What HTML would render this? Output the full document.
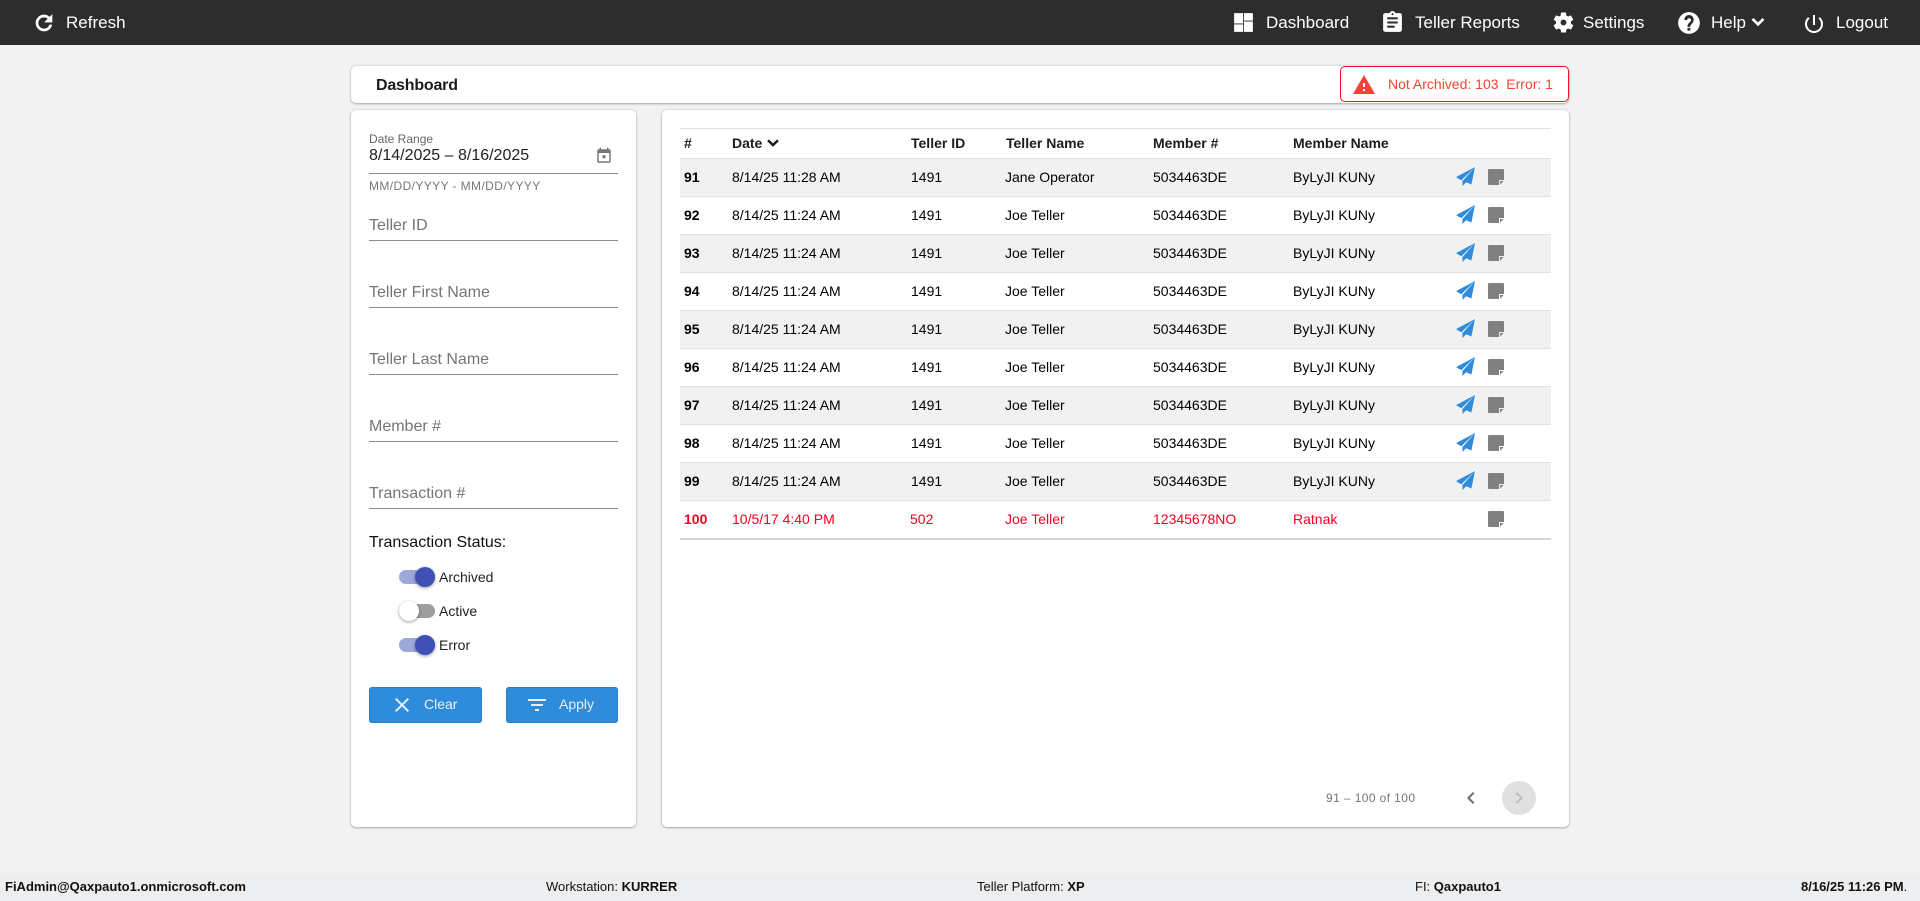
<!DOCTYPE html>
<html lang="en">
<head>
<meta charset="utf-8">
<title>Dashboard</title>
<style>
*{box-sizing:border-box}
html,body{margin:0;padding:0;width:1920px;height:901px;overflow:hidden;background:#f2f2f2;font-family:"Liberation Sans",Arial,sans-serif;color:#000}
.a{position:absolute;white-space:nowrap}
svg{position:absolute;display:block}
#top{left:0;top:0;width:1920px;height:45px;background:#2d2d2d}
.nav{color:#fff;font-size:17px;line-height:20px;top:13px}
.card{background:#fff;border-radius:5px;box-shadow:0 1px 2px rgba(0,0,0,.25),0 0 2px rgba(0,0,0,.18)}
.ph{left:369px;font-size:16px;line-height:20px;color:#757575}
.ln{left:369px;width:249px;height:1px;background:#8c8c8c}
.tl{font-size:14px;line-height:16px;color:#222}
.trk{left:399px;width:36px;height:14px;border-radius:7px}
.th{width:20px;height:20px;border-radius:50%;box-shadow:0 1px 3px rgba(0,0,0,.4)}
.btn{background:#2f8cdb;border-radius:3px;height:36px;top:687px;box-shadow:inset 0 0 0 1px #2a80c8}
.bt{color:#e6f0fa;font-size:14px;line-height:16px;top:696px}
.row{left:680px;width:871px;height:38px;margin-top:1px;border-bottom:1px solid #dfdfe6}
.row.g{background:#f1f1f2}
.c{font-size:14px;line-height:16px;color:#000}
.h{font-size:14px;line-height:16px;font-weight:bold;color:#1c1c1c;top:135px}
.r{color:#f4001c}
.ft{font-size:13px;line-height:16px;top:879px;color:#111}
</style>
</head>
<body>
<svg width="0" height="0" style="position:absolute"><defs>
<symbol id="pl" viewBox="0 0 18 18"><path fill="#2f8cdb" d="M18 0L0 9.6l5 3L18 0zM18 0L6.1 13.4V18l3.5-3.6 5 2.2L18 0z"/></symbol>
<symbol id="nt" viewBox="0 0 16 16"><path fill="#808080" d="M1 0h14a1 1 0 011 1v10h-5v5H1a1 1 0 01-1-1V1a1 1 0 011-1z"/><path fill="#808080" d="M12 12h3.6L12 15.6z"/></symbol>
</defs></svg>
<div class="a" id="top"></div>
<svg style="left:32px;top:11px" width="24" height="24" viewBox="0 0 24 24" fill="#fff" stroke="#fff" stroke-width=".7"><path d="M17.65 6.35C16.2 4.9 14.21 4 12 4c-4.42 0-7.99 3.58-7.99 8s3.57 8 7.99 8c3.73 0 6.84-2.55 7.73-6h-2.08c-.82 2.33-3.04 4-5.65 4-3.31 0-6-2.69-6-6s2.69-6 6-6c1.66 0 3.14.69 4.22 1.78L13 11h7V4l-2.35 2.35z"/></svg>
<div class="a nav" style="left:66px">Refresh</div>

<svg style="left:1231px;top:10px" width="25" height="25" viewBox="0 0 24 24" fill="#fff"><path d="M3 13h8.6V3H3v10zm0 8h8.6v-7.2H3V21zm9.4 0H21V11h-8.6v10zm0-18v7.2H21V3h-8.6z"/></svg>
<div class="a nav" style="left:1266px">Dashboard</div>
<svg style="left:1380px;top:10px" width="25" height="25" viewBox="0 0 24 24" fill="#fff"><path d="M19 3h-4.18C14.4 1.84 13.3 1 12 1c-1.3 0-2.4.84-2.82 2H5c-1.1 0-2 .9-2 2v14c0 1.1.9 2 2 2h14c1.1 0 2-.9 2-2V5c0-1.1-.9-2-2-2zm-7 0c.55 0 1 .45 1 1s-.45 1-1 1-1-.45-1-1 .45-1 1-1zm2 14H7v-2h7v2zm3-4H7v-2h10v2zm0-4H7V7h10v2z"/></svg>
<div class="a nav" style="left:1415px">Teller Reports</div>
<svg style="left:1551px;top:10px" width="25" height="25" viewBox="0 0 24 24" fill="#fff"><path d="M19.14 12.94c.04-.3.06-.61.06-.94 0-.32-.02-.64-.07-.94l2.03-1.58c.18-.14.23-.41.12-.61l-1.92-3.32c-.12-.22-.37-.29-.59-.22l-2.39.96c-.5-.38-1.03-.7-1.62-.94l-.36-2.54c-.04-.24-.24-.41-.48-.41h-3.84c-.24 0-.43.17-.47.41l-.36 2.54c-.59.24-1.13.57-1.62.94l-2.39-.96c-.22-.08-.47 0-.59.22L2.74 8.87c-.12.21-.08.47.12.61l2.03 1.58c-.05.3-.09.63-.09.94s.02.64.07.94l-2.03 1.58c-.18.14-.23.41-.12.61l1.92 3.32c.12.22.37.29.59.22l2.39-.96c.5.38 1.03.7 1.62.94l.36 2.54c.05.24.24.41.48.41h3.84c.24 0 .44-.17.47-.41l.36-2.54c.59-.24 1.13-.56 1.62-.94l2.39.96c.22.08.47 0 .59-.22l1.92-3.32c.12-.22.07-.47-.12-.61l-2.01-1.58zM12 14.8c-1.55 0-2.8-1.25-2.8-2.8s1.25-2.8 2.8-2.8 2.8 1.25 2.8 2.8-1.25 2.8-2.8 2.8z"/></svg>
<div class="a nav" style="left:1583px">Settings</div>
<svg style="left:1676px;top:10px" width="26" height="26" viewBox="0 0 24 24" fill="#fff"><path d="M12 2C6.48 2 2 6.48 2 12s4.48 10 10 10 10-4.48 10-10S17.52 2 12 2zm1.2 17h-2.6v-2.5h2.6V19zm2.4-7.3l-1 1c-.9.9-1.4 1.5-1.4 2.9h-2.6v-.6c0-1.2.5-2.2 1.3-3l1.4-1.4c.4-.36.6-.8.6-1.3 0-.95-.8-1.7-1.8-1.7s-1.8.75-1.8 1.7H7.7C7.7 6.4 9.6 4.6 12 4.6s4.3 1.8 4.3 4.2c0 1.1-.3 2.1-.7 2.9z"/></svg>
<div class="a nav" style="left:1711px">Help</div>
<svg style="left:1747px;top:11px" width="22" height="22" viewBox="0 0 24 24" fill="#fff"><path d="M16.9 7.6L12 12.5 7.1 7.6 5 9.7l7 7 7-7z"/></svg>
<svg style="left:1802px;top:12px" width="24" height="24" viewBox="0 0 24 24" fill="#fff"><path d="M13 3h-2v10h2V3zm4.83 2.17l-1.42 1.42C17.99 7.86 19 9.81 19 12c0 3.87-3.13 7-7 7s-7-3.13-7-7c0-2.19 1.01-4.14 2.58-5.42L6.17 5.17C4.23 6.82 3 9.26 3 12c0 4.97 4.03 9 9 9s9-4.03 9-9c0-2.74-1.23-5.18-3.17-6.83z"/></svg>
<div class="a nav" style="left:1836px">Logout</div>

<div class="a card" style="left:351px;top:66px;width:1218px;height:37px"></div>
<div class="a" style="left:376px;top:76px;font-size:16px;line-height:20px;font-weight:bold;color:#1c1c1c;letter-spacing:-.2px">Dashboard</div>
<div class="a" style="left:1340px;top:66px;width:229px;height:36px;border:1.5px solid #f4101c;border-radius:5px;background:#fff"></div>
<svg style="left:1352px;top:73px" width="24" height="24" viewBox="0 0 24 24" fill="#f44336"><path d="M1 21h22L12 2 1 21zm12-3h-2v-2h2v2zm0-4h-2v-4h2v4z"/></svg>
<div class="a" style="left:1388px;top:76px;font-size:14px;line-height:16px;color:#f44336;white-space:pre">Not Archived: 103  Error: 1</div>

<div class="a card" style="left:351px;top:110px;width:285px;height:717px"></div>
<div class="a" style="left:369px;top:132px;font-size:12px;line-height:14px;color:#666">Date Range</div>
<div class="a" style="left:369px;top:147px;font-size:16px;line-height:18px;color:#222">8/14/2025 – 8/16/2025</div>
<svg style="left:595px;top:147px" width="18" height="18" viewBox="0 0 24 24" fill="#777"><path d="M19 3h-1V1h-2v2H8V1H6v2H5c-1.11 0-1.99.9-1.99 2L3 19c0 1.1.89 2 2 2h14c1.1 0 2-.9 2-2V5c0-1.1-.9-2-2-2zm0 16H5V8h14v11zM10 11h4v4h-4z"/></svg>
<div class="a ln" style="top:173px"></div>
<div class="a" style="left:369px;top:179px;font-size:12px;line-height:14px;color:#777;letter-spacing:.4px">MM/DD/YYYY - MM/DD/YYYY</div>

<div class="a ph" style="top:216px">Teller ID</div><div class="a ln" style="top:240px"></div>
<div class="a ph" style="top:283px">Teller First Name</div><div class="a ln" style="top:307px"></div>
<div class="a ph" style="top:350px">Teller Last Name</div><div class="a ln" style="top:374px"></div>
<div class="a ph" style="top:417px">Member #</div><div class="a ln" style="top:441px"></div>
<div class="a ph" style="top:484px">Transaction #</div><div class="a ln" style="top:508px"></div>
<div class="a" style="left:369px;top:534px;font-size:16px;line-height:18px;color:#111">Transaction Status:</div>

<div class="a trk" style="top:570px;background:#9fa8da"></div><div class="a th" style="left:415px;top:567px;background:#3f51b5"></div><div class="a tl" style="left:439px;top:569px">Archived</div>
<div class="a trk" style="top:604px;background:#9e9e9e"></div><div class="a th" style="left:399px;top:601px;background:#fff"></div><div class="a tl" style="left:439px;top:603px">Active</div>
<div class="a trk" style="top:638px;background:#9fa8da"></div><div class="a th" style="left:415px;top:635px;background:#3f51b5"></div><div class="a tl" style="left:439px;top:637px">Error</div>

<div class="a btn" style="left:369px;width:113px"></div>
<svg style="left:390px;top:693px" width="24" height="24" viewBox="0 0 24 24" fill="#e6f0fa"><path d="M19 6.41L17.59 5 12 10.59 6.41 5 5 6.41 10.59 12 5 17.59 6.41 19 12 13.41 17.59 19 19 17.59 13.41 12z"/></svg>
<div class="a bt" style="left:424px">Clear</div>
<div class="a btn" style="left:506px;width:112px"></div>
<svg style="left:525px;top:693px" width="24" height="24" viewBox="0 0 24 24" fill="#e6f0fa"><path d="M10 18h4v-2h-4v2zM3 6v2h18V6H3zm3 7h12v-2H6v2z"/></svg>
<div class="a bt" style="left:559px">Apply</div>

<div class="a card" style="left:662px;top:110px;width:907px;height:717px"></div>
<div class="a" style="left:680px;top:128px;width:871px;height:1px;background:#dfdfe6"></div>
<div class="a" style="left:680px;top:158px;width:871px;height:1px;background:#dfdfe6"></div>
<div class="a h" style="left:684px">#</div>
<div class="a h" style="left:732px">Date</div>
<svg style="left:763px;top:133px" width="20" height="20" viewBox="0 0 24 24" fill="#1c1c1c"><path d="M16.9 7.6L12 12.5 7.1 7.6 5 9.7l7 7 7-7z"/></svg>
<div class="a h" style="left:911px">Teller ID</div>
<div class="a h" style="left:1006px">Teller Name</div>
<div class="a h" style="left:1153px">Member #</div>
<div class="a h" style="left:1293px">Member Name</div>

<div class="a row g" style="top:158px"></div>
<div class="a c" style="left:684px;top:169px;font-weight:bold">91</div><div class="a c" style="left:732px;top:169px">8/14/25 11:28 AM</div><div class="a c" style="left:911px;top:169px">1491</div><div class="a c" style="left:1005px;top:169px">Jane Operator</div><div class="a c" style="left:1153px;top:169px">5034463DE</div><div class="a c" style="left:1293px;top:169px">ByLyJI KUNy</div>
<svg style="left:1456px;top:167px" width="19" height="19"><use href="#pl"/></svg>
<svg style="left:1488px;top:169px" width="16" height="16"><use href="#nt"/></svg>

<div class="a row" style="top:196px"></div>
<div class="a c" style="left:684px;top:207px;font-weight:bold">92</div><div class="a c" style="left:732px;top:207px">8/14/25 11:24 AM</div><div class="a c" style="left:911px;top:207px">1491</div><div class="a c" style="left:1005px;top:207px">Joe Teller</div><div class="a c" style="left:1153px;top:207px">5034463DE</div><div class="a c" style="left:1293px;top:207px">ByLyJI KUNy</div>
<svg style="left:1456px;top:205px" width="19" height="19"><use href="#pl"/></svg>
<svg style="left:1488px;top:207px" width="16" height="16"><use href="#nt"/></svg>

<div class="a row g" style="top:234px"></div>
<div class="a c" style="left:684px;top:245px;font-weight:bold">93</div><div class="a c" style="left:732px;top:245px">8/14/25 11:24 AM</div><div class="a c" style="left:911px;top:245px">1491</div><div class="a c" style="left:1005px;top:245px">Joe Teller</div><div class="a c" style="left:1153px;top:245px">5034463DE</div><div class="a c" style="left:1293px;top:245px">ByLyJI KUNy</div>
<svg style="left:1456px;top:243px" width="19" height="19"><use href="#pl"/></svg>
<svg style="left:1488px;top:245px" width="16" height="16"><use href="#nt"/></svg>

<div class="a row" style="top:272px"></div>
<div class="a c" style="left:684px;top:283px;font-weight:bold">94</div><div class="a c" style="left:732px;top:283px">8/14/25 11:24 AM</div><div class="a c" style="left:911px;top:283px">1491</div><div class="a c" style="left:1005px;top:283px">Joe Teller</div><div class="a c" style="left:1153px;top:283px">5034463DE</div><div class="a c" style="left:1293px;top:283px">ByLyJI KUNy</div>
<svg style="left:1456px;top:281px" width="19" height="19"><use href="#pl"/></svg>
<svg style="left:1488px;top:283px" width="16" height="16"><use href="#nt"/></svg>

<div class="a row g" style="top:310px"></div>
<div class="a c" style="left:684px;top:321px;font-weight:bold">95</div><div class="a c" style="left:732px;top:321px">8/14/25 11:24 AM</div><div class="a c" style="left:911px;top:321px">1491</div><div class="a c" style="left:1005px;top:321px">Joe Teller</div><div class="a c" style="left:1153px;top:321px">5034463DE</div><div class="a c" style="left:1293px;top:321px">ByLyJI KUNy</div>
<svg style="left:1456px;top:319px" width="19" height="19"><use href="#pl"/></svg>
<svg style="left:1488px;top:321px" width="16" height="16"><use href="#nt"/></svg>

<div class="a row" style="top:348px"></div>
<div class="a c" style="left:684px;top:359px;font-weight:bold">96</div><div class="a c" style="left:732px;top:359px">8/14/25 11:24 AM</div><div class="a c" style="left:911px;top:359px">1491</div><div class="a c" style="left:1005px;top:359px">Joe Teller</div><div class="a c" style="left:1153px;top:359px">5034463DE</div><div class="a c" style="left:1293px;top:359px">ByLyJI KUNy</div>
<svg style="left:1456px;top:357px" width="19" height="19"><use href="#pl"/></svg>
<svg style="left:1488px;top:359px" width="16" height="16"><use href="#nt"/></svg>

<div class="a row g" style="top:386px"></div>
<div class="a c" style="left:684px;top:397px;font-weight:bold">97</div><div class="a c" style="left:732px;top:397px">8/14/25 11:24 AM</div><div class="a c" style="left:911px;top:397px">1491</div><div class="a c" style="left:1005px;top:397px">Joe Teller</div><div class="a c" style="left:1153px;top:397px">5034463DE</div><div class="a c" style="left:1293px;top:397px">ByLyJI KUNy</div>
<svg style="left:1456px;top:395px" width="19" height="19"><use href="#pl"/></svg>
<svg style="left:1488px;top:397px" width="16" height="16"><use href="#nt"/></svg>

<div class="a row" style="top:424px"></div>
<div class="a c" style="left:684px;top:435px;font-weight:bold">98</div><div class="a c" style="left:732px;top:435px">8/14/25 11:24 AM</div><div class="a c" style="left:911px;top:435px">1491</div><div class="a c" style="left:1005px;top:435px">Joe Teller</div><div class="a c" style="left:1153px;top:435px">5034463DE</div><div class="a c" style="left:1293px;top:435px">ByLyJI KUNy</div>
<svg style="left:1456px;top:433px" width="19" height="19"><use href="#pl"/></svg>
<svg style="left:1488px;top:435px" width="16" height="16"><use href="#nt"/></svg>

<div class="a row g" style="top:462px"></div>
<div class="a c" style="left:684px;top:473px;font-weight:bold">99</div><div class="a c" style="left:732px;top:473px">8/14/25 11:24 AM</div><div class="a c" style="left:911px;top:473px">1491</div><div class="a c" style="left:1005px;top:473px">Joe Teller</div><div class="a c" style="left:1153px;top:473px">5034463DE</div><div class="a c" style="left:1293px;top:473px">ByLyJI KUNy</div>
<svg style="left:1456px;top:471px" width="19" height="19"><use href="#pl"/></svg>
<svg style="left:1488px;top:473px" width="16" height="16"><use href="#nt"/></svg>

<div class="a" style="left:680px;top:538px;width:871px;height:2px;background:#d5d5db"></div>
<div class="a c r" style="left:684px;top:511px;font-weight:bold">100</div><div class="a c r" style="left:732px;top:511px">10/5/17 4:40 PM</div><div class="a c r" style="left:910px;top:511px">502</div><div class="a c r" style="left:1005px;top:511px">Joe Teller</div><div class="a c r" style="left:1153px;top:511px">12345678NO</div><div class="a c r" style="left:1293px;top:511px">Ratnak</div>
<svg style="left:1488px;top:511px" width="16" height="16"><use href="#nt"/></svg>

<div class="a" style="left:1326px;top:791px;font-size:12px;line-height:14px;color:#757575;letter-spacing:.4px">91 – 100 of 100</div>
<svg style="left:1459px;top:786px" width="24" height="24" viewBox="0 0 24 24" fill="#6b6b6b"><path d="M15.41 7.41L14 6l-6 6 6 6 1.41-1.41L10.83 12z"/></svg>
<div class="a" style="left:1502px;top:781px;width:34px;height:34px;border-radius:50%;background:#e0e0e0"></div>
<svg style="left:1507px;top:786px" width="24" height="24" viewBox="0 0 24 24" fill="#bdbdbd"><path d="M10 6L8.59 7.41 13.17 12l-4.58 4.59L10 18l6-6z"/></svg>

<div class="a" style="left:0;top:875px;width:1920px;height:26px;background:#eceef0"></div>
<div class="a ft" style="left:5px;font-weight:bold">FiAdmin@Qaxpauto1.onmicrosoft.com</div>
<div class="a ft" style="left:546px">Workstation: <b>KURRER</b></div>
<div class="a ft" style="left:977px">Teller Platform: <b>XP</b></div>
<div class="a ft" style="left:1415px">FI: <b>Qaxpauto1</b></div>
<div class="a ft" style="left:1801px"><b>8/16/25 11:26 PM</b>.</div>
</body>
</html>
